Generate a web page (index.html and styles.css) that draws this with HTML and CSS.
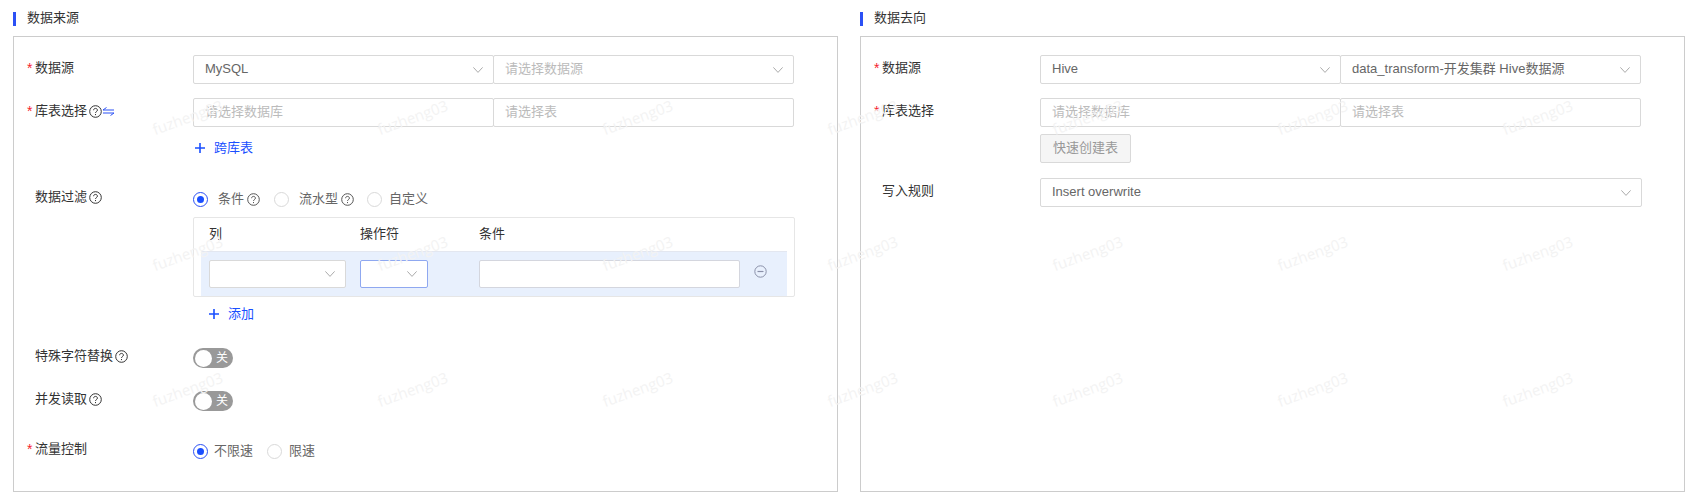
FILE: index.html
```html
<!DOCTYPE html>
<html lang="zh-CN">
<head>
<meta charset="utf-8">
<title>数据同步配置</title>
<link rel="stylesheet" href="styles.css">
</head>
<body>
<svg class="defs" width="0" height="0" aria-hidden="true">
  <symbol id="chev" viewBox="0 0 10 6"><path d="M.4.4 5 5.4 9.6.4" fill="none" stroke="currentColor"/></symbol>
  <symbol id="help" viewBox="0 0 13 13"><circle cx="6.5" cy="6.5" r="5.8" fill="none" stroke="currentColor"/><path d="M4.6 5.2c0-1.1.8-1.8 1.9-1.8s1.9.7 1.9 1.7c0 1.5-1.9 1.5-1.9 2.9" fill="none" stroke="currentColor"/><rect x="6" y="9" width="1" height="1.1" fill="currentColor"/></symbol>
  <symbol id="plus" viewBox="0 0 10 10"><path d="M0 5h10M5 0v10" fill="none" stroke="currentColor" stroke-width="1.6"/></symbol>
</svg>
<main class="page">
  <section class="panel">
    <h2 class="panel-title">数据来源</h2>
    <div class="panel-box">
      <div class="row">
        <div class="label"><i class="req">*</i>数据源</div>
        <div class="control group">
          <div class="select"><span class="value">MySQL</span><svg class="chev"><use href="#chev"/></svg></div>
          <div class="select"><span class="ph">请选择数据源</span><svg class="chev"><use href="#chev"/></svg></div>
        </div>
      </div>
      <div class="row gap14">
        <div class="label"><i class="req">*</i>库表选择<svg class="help"><use href="#help"/></svg><svg class="swap" viewBox="0 0 11 9"><path d="M3.5.5 0 3h11M7.500 8.500 11 6H0" fill="none" stroke="currentColor"/></svg></div>
        <div class="control group">
          <div class="select"><span class="ph">请选择数据库</span></div>
          <div class="select"><span class="ph">请选择表</span></div>
        </div>
      </div>
      <div class="row link-row">
        <div class="label"></div>
        <div class="link link-cross"><svg class="plus"><use href="#plus"/></svg>跨库表</div>
      </div>
      <div class="row filter-row">
        <div class="label label-tight">数据过滤<svg class="help"><use href="#help"/></svg></div>
        <div class="control">
          <div class="radios">
            <span class="radio on"></span><span class="radio-text first">条件</span><svg class="help soft"><use href="#help"/></svg>
            <span class="radio r2"></span><span class="radio-text first">流水型</span><svg class="help soft"><use href="#help"/></svg>
            <span class="radio r3"></span><span class="radio-text">自定义</span>
          </div>
          <div class="cond-table">
            <div class="cond-head">
              <span class="col-a">列</span><span class="col-b">操作符</span><span>条件</span>
            </div>
            <div class="cond-row">
              <div class="select col-a"><svg class="chev"><use href="#chev"/></svg></div>
              <div class="select col-b focus"><svg class="chev"><use href="#chev"/></svg></div>
              <div class="text-input"></div>
              <svg class="minus" viewBox="0 0 13 13"><circle cx="6.5" cy="6.5" r="5.7" fill="none" stroke="currentColor"/><path d="M3.5 6.5h6" stroke="currentColor" stroke-width="1.2"/></svg>
            </div>
          </div>
          <div class="link link-add"><svg class="plus"><use href="#plus"/></svg>添加</div>
        </div>
      </div>
      <div class="row toggle-row">
        <div class="label label-tight">特殊字符替换<svg class="help"><use href="#help"/></svg></div>
        <div class="toggle"><span class="knob"></span><span>关</span></div>
      </div>
      <div class="row toggle-row next">
        <div class="label label-tight">并发读取<svg class="help"><use href="#help"/></svg></div>
        <div class="toggle"><span class="knob"></span><span>关</span></div>
      </div>
      <div class="row flow-row">
        <div class="label label-tight"><i class="req">*</i>流量控制</div>
        <div class="radios">
          <span class="radio on"></span><span class="radio-text near">不限速</span>
          <span class="radio r2"></span><span class="radio-text">限速</span>
        </div>
      </div>
    </div>
  </section>

  <section class="panel">
    <h2 class="panel-title">数据去向</h2>
    <div class="panel-box">
      <div class="row">
        <div class="label"><i class="req">*</i>数据源</div>
        <div class="control group">
          <div class="select"><span class="value">Hive</span><svg class="chev"><use href="#chev"/></svg></div>
          <div class="select"><span class="value">data_transform-开发集群 Hive数据源</span><svg class="chev"><use href="#chev"/></svg></div>
        </div>
      </div>
      <div class="row gap14">
        <div class="label"><i class="req">*</i>库表选择</div>
        <div class="control group">
          <div class="select"><span class="ph">请选择数据库</span></div>
          <div class="select"><span class="ph">请选择表</span></div>
        </div>
      </div>
      <div class="row btn-row">
        <div class="label"></div>
        <div class="btn-disabled">快速创建表</div>
      </div>
      <div class="row write-row">
        <div class="label">写入规则</div>
        <div class="control wide">
          <div class="select"><span class="value">Insert overwrite</span><svg class="chev"><use href="#chev"/></svg></div>
        </div>
      </div>
    </div>
  </section>
</main>
<div class="watermarks" aria-hidden="true">
  <span>fuzheng03</span><span>fuzheng03</span><span>fuzheng03</span><span>fuzheng03</span><span>fuzheng03</span><span>fuzheng03</span><span>fuzheng03</span>
  <span>fuzheng03</span><span>fuzheng03</span><span>fuzheng03</span><span>fuzheng03</span><span>fuzheng03</span><span>fuzheng03</span><span>fuzheng03</span>
  <span>fuzheng03</span><span>fuzheng03</span><span>fuzheng03</span><span>fuzheng03</span><span>fuzheng03</span><span>fuzheng03</span><span>fuzheng03</span>
</div>
</body>
</html>
```
FILE: styles.css
```css
* { box-sizing: border-box; }
html, body { height: 100%; }
body {
  margin: 0;
  overflow: hidden;
  background: #fff;
  color: #333;
  font: 13px/20px "Liberation Sans", "Noto Sans CJK SC", sans-serif;
}
.defs { position: absolute; }
.page {
  display: flex;
  gap: 22px;
  height: 499px;
  padding: 9px 5px 7px 13px;
}
.panel { display: flex; flex-direction: column; width: 825px; }
.panel-title {
  margin: 0 0 7px;
  padding: 0 0 2px 14px;
  font-size: 13px;
  font-weight: 400;
  line-height: 18px;
  position: relative;
}
.panel-title::before {
  content: "";
  position: absolute;
  left: 0;
  top: 3px;
  width: 3px;
  height: 14px;
  background: #2b50f5;
}
.panel-box {
  flex: 1;
  border: 1px solid #ccc;
  padding-top: 18px;
}
.row { display: flex; align-items: flex-start; }
.gap14 { margin-top: 14px; }
.label {
  flex: none;
  width: 179px;
  padding-left: 21px;
  line-height: 26px;
  display: flex;
  align-items: center;
}
.label-tight { line-height: 16px; }
.req {
  width: 8px;
  margin-left: -8px;
  color: #f5222d;
  font-size: 14px;
  font-style: normal;
}
.control { width: 601px; }
.control.wide { width: 602px; }
.group { display: flex; }
.group .select { flex: 1; }
.group .select + .select { margin-left: -1px; }
.select, .text-input {
  display: flex;
  align-items: center;
  justify-content: space-between;
  height: 29px;
  padding: 0 10px 2px 11px;
  background: #fff;
  border: 1px solid #d9d9d9;
  border-radius: 2px;
}
.value { color: #666; }
.ph { color: #bbb; }
.chev { width: 10px; height: 6px; margin: 2px 0 0 auto; color: #aaa; }
.help { width: 13px; height: 13px; margin-left: 2px; flex: none; color: #333; }
.help.soft { margin-left: 3px; color: #555; }
.swap { width: 11px; height: 9px; margin-left: 1px; color: #2b50f5; }
.plus { width: 10px; height: 10px; color: #1a4fff; flex: none; }
.link { display: flex; align-items: center; color: #1a4fff; }
.link-row { margin-top: 11px; }
.link-cross { padding-left: 2px; }
.link-cross .plus { margin-right: 9px; }
.link-add { margin: 7px 0 0 16px; }
.link-add .plus { margin-right: 9px; }
.filter-row { margin-top: 31px; }
.radios { display: flex; align-items: center; height: 20px; color: #666; }
.radio {
  flex: none;
  width: 15px;
  height: 15px;
  border: 1px solid #d9d9d9;
  border-radius: 50%;
}
.radio.on { border-color: #2b50f5; padding: 3px; }
.radio.on::before {
  content: "";
  display: block;
  width: 7px;
  height: 7px;
  border-radius: 50%;
  background: #1a4fff;
}
.r2 { margin-left: 14px; }
.r3 { margin-left: 13px; }
.radio-text { margin-left: 7px; }
.radio-text.near { margin-left: 6px; }
.radio-text.first { margin-left: 10px; }
.cond-table {
  width: 602px;
  height: 80px;
  margin-top: 8px;
  padding: 0 7px;
  border: 1px solid #e6e6e6;
  border-radius: 2px;
}
.cond-head {
  display: flex;
  height: 33px;
  padding: 0 0 2px 8px;
  align-items: center;
}
.col-a { width: 137px; margin-right: 14px; flex: none; }
.col-b { width: 68px; margin-right: 51px; flex: none; }
.cond-row {
  display: flex;
  align-items: center;
  height: 45px;
  padding: 0 8px;
  background: #e8f0fd;
  border-top: 1px solid #e3e7f0;
}
.cond-row .select, .text-input { height: 28px; padding-right: 10px; }
.select.focus { border-color: #8fa8f0; }
.text-input { width: 261px; border-color: #d4d6de; flex: none; }
.minus { width: 13px; height: 13px; margin: -5px 0 0 14px; color: #8a90a8; flex: none; }
.toggle-row { margin-top: 24px; }
.toggle-row.next { margin-top: 23px; }
.toggle {
  display: flex;
  align-items: center;
  width: 40px;
  height: 20px;
  padding: 0 0 0 2px;
  border-radius: 10px;
  background: #999;
  color: #fff;
  font-size: 12px;
}
.knob {
  width: 17px;
  height: 17px;
  margin-right: 4px;
  border-radius: 50%;
  background: #fff;
}
.flow-row { margin-top: 27px; }
.flow-row .label { padding-top: 3px; }
.flow-row .radios { margin-top: 3px; }
.btn-row { margin-top: 7px; }
.btn-disabled {
  width: 91px;
  height: 29px;
  line-height: 25px;
  text-align: center;
  color: #999;
  background: #f5f5f5;
  border: 1px solid #d9d9d9;
  border-radius: 2px;
}
.write-row { margin-top: 15px; }
.watermarks {
  position: absolute;
  left: 75px;
  top: 49px;
  display: grid;
  grid-template-columns: repeat(7, 225px);
  grid-auto-rows: 136px;
  pointer-events: none;
}
.watermarks span {
  display: flex;
  align-items: center;
  justify-content: center;
  font: 15px "Open Sans", sans-serif;
  color: #f3f3f3;
  transform: rotate(-20deg);
}
```
